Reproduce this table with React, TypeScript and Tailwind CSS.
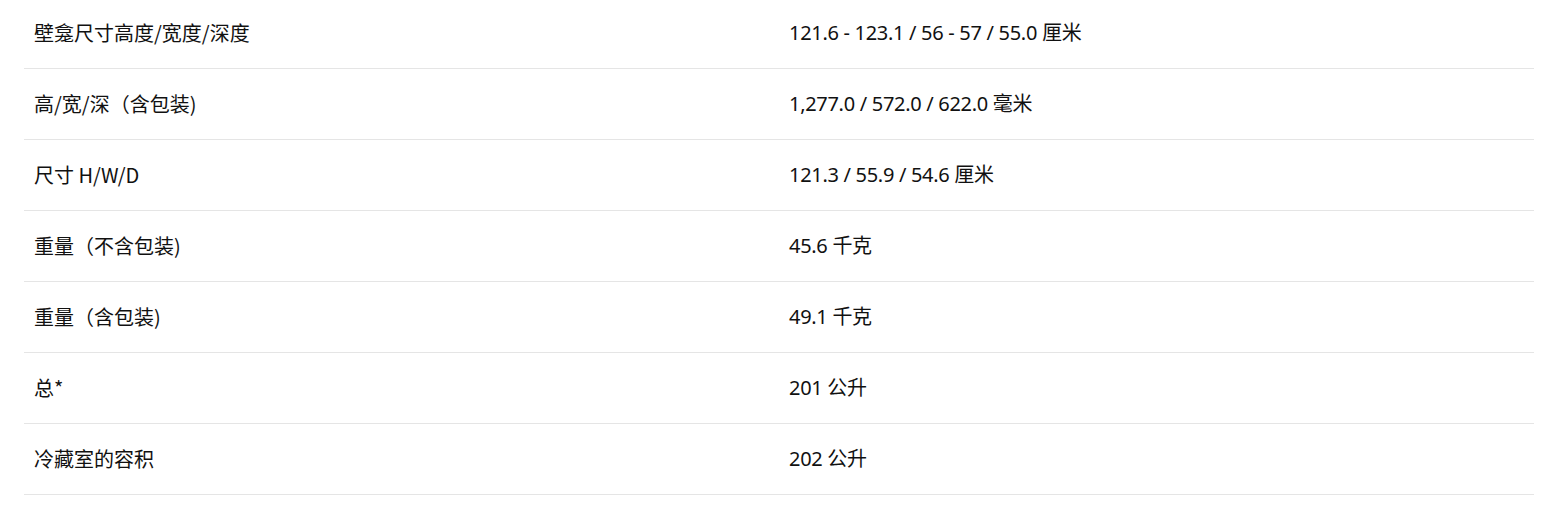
import React from 'react';

const specs = [
  { label: '壁龛尺寸高度/宽度/深度', value: '121.6 - 123.1 / 56 - 57 / 55.0 厘米' },
  { label: '高/宽/深（含包装)', value: '1,277.0 / 572.0 / 622.0 毫米' },
  { label: '尺寸 H/W/D', value: '121.3 / 55.9 / 54.6 厘米' },
  { label: '重量（不含包装)', value: '45.6 千克' },
  { label: '重量（含包装)', value: '49.1 千克' },
  { label: '总*', value: '201 公升' },
  { label: '冷藏室的容积', value: '202 公升' },
];

const App = () => {
  return (
    <div className="min-h-screen bg-white text-[#111111]">
      <div className="ml-6 mr-[34px] -mt-[2px]">
        {specs.map((row) => (
          <div key={row.label} className="grid grid-cols-2 h-[71px] border-b border-[#e5e5e5]">
            {/* Label */}
            <div className="flex items-center px-[10px] text-[20px] font-['Noto_Sans_CJK_SC',sans-serif]">
              {row.label}
            </div>
            {/* Value */}
            <div className="flex items-center px-[10px] text-[20px] tracking-[-0.3px] font-['Noto_Sans','Noto_Sans_CJK_SC',sans-serif]">
              {row.value}
            </div>
          </div>
        ))}
      </div>
    </div>
  );
};

export default App;
